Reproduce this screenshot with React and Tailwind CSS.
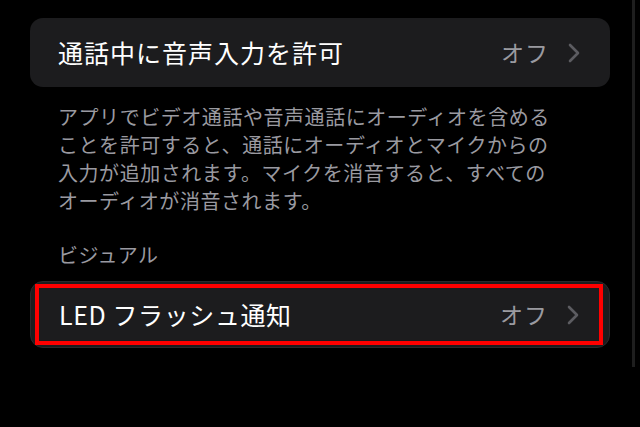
export default function App() {
  const font = { fontFamily: '"Noto Sans CJK JP", "Noto Sans", sans-serif' }

  return (
    <div className="w-[640px] h-[427px] bg-black flex overflow-hidden" style={font}>
      {/* Content */}
      <div className="w-[632px] pl-[30px] pr-[22px] pt-[18px] flex flex-col">
        <div className="h-[69px] rounded-[13px] bg-[#1c1c1e] flex items-center pl-[28px] pr-[30px]">
          <span className="flex-1 text-[25px] text-white tracking-[1px]">通話中に音声入力を許可</span>
          <span className="text-[23px] text-[#9a9aa0] tracking-[1px]">オフ</span>
          <Chevron />
        </div>

        <p className="mt-[16px] pl-[28px] text-[20px] leading-[28px] text-[#9a9aa0] tracking-[0.55px] whitespace-nowrap">
          アプリでビデオ通話や音声通話にオーディオを含める<br />
          ことを許可すると、通話にオーディオとマイクからの<br />
          入力が追加されます。マイクを消音すると、すべての<br />
          オーディオが消音されます。
        </p>

        <div className="mt-[26px] pl-[28px] text-[20px] leading-[28px] text-[#9a9aa0] tracking-[0.5px]">ビジュアル</div>

        <div className="mt-[12px] h-[67px] rounded-[13px] bg-[#1c1c1e] border border-[#2a2a2c] relative flex items-center pl-[28px] pr-[30px]">
          <div className="absolute left-[4px] top-[2px] right-[6px] bottom-[2px] border-[4px] border-[#ff0000]" />
          <span className="flex-1 text-[25px] text-white tracking-[0.6px]">LED フラッシュ通知</span>
          <span className="text-[23px] text-[#9a9aa0] tracking-[1px]">オフ</span>
          <Chevron />
        </div>
      </div>

      {/* Right edge strip */}
      <div className="w-[3px] h-[367px] bg-[#1e1e1e]" />
    </div>
  )
}

function Chevron() {
  return (
    <svg width="12" height="20" viewBox="0 0 12 20" className="ml-[19px]">
      <polyline points="2,2 10,10 2,18" fill="none" stroke="#5c5c61" strokeWidth="2.6" strokeLinecap="round" strokeLinejoin="round" />
    </svg>
  )
}
